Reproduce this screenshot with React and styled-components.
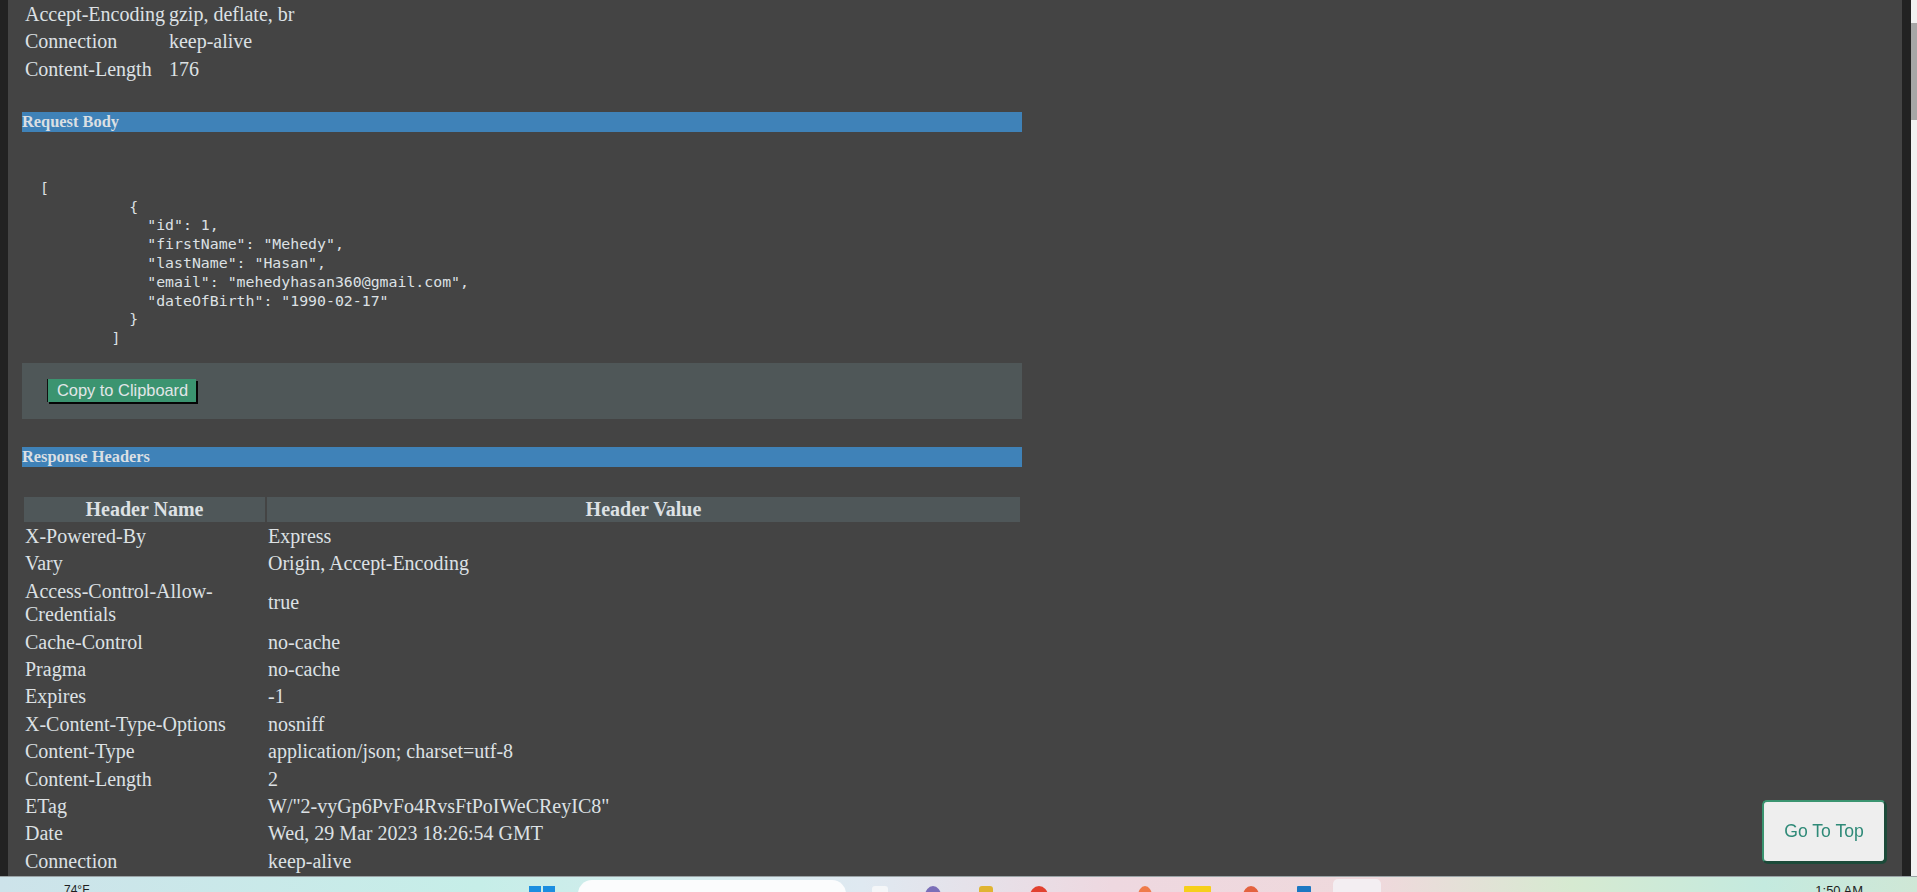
import React from 'react'
import styled, { createGlobalStyle } from 'styled-components'

const GlobalStyle = createGlobalStyle`
  *, *::before, *::after {
    box-sizing: border-box;
  }

  html, body {
    margin: 0;
    padding: 0;
    background-color: #222222;
    overflow: hidden;
  }
`

const Screen = styled.div`
  display: flex;
  height: 100vh;
  padding-left: 8px;
`

const Panel = styled.main`
  flex: 1;
  background-color: #444444;
  padding: 0 14px;
  color: #dde1e4;
  font-family: "Liberation Serif", "Times New Roman", serif;
  overflow: hidden;
`

const Content = styled.div`
  width: 1000px;
  display: flex;
  flex-direction: column;
`

const ScrollTrack = styled.div`
  width: 6px;
  margin-left: 9px;
  background-color: #f1f1f1;
`

const ScrollThumb = styled.div`
  margin-top: 23px;
  height: 97px;
  background-color: #a6a6a6;
`

const HeaderTable = styled.table`
  border-spacing: 2px;
  align-self: ${(props) => (props.$full ? 'stretch' : 'flex-start')};
  table-layout: ${(props) => (props.$full ? 'fixed' : 'auto')};
  margin-top: ${(props) => props.$top || '0'};
  font-size: 20px;

  th {
    background-color: #4f5759;
    font-weight: bold;
    line-height: 23px;
    padding: 1px;
    text-align: center;
  }

  td {
    line-height: 23.4px;
    padding: 1px;
    vertical-align: middle;
    text-align: left;
  }
`

const NameHead = styled.th`
  width: 241px;
`

const SectionBar = styled.h4`
  margin: ${(props) => props.$top} 0 0;
  height: 20px;
  line-height: 20px;
  background-color: #3f82b8;
  font-size: 16.4px;
  font-weight: bold;
  color: #dadfe3;
`

const CodeBlock = styled.pre`
  margin: 47px 0 15px;
  padding-left: 18px;
  font-family: "DejaVu Sans Mono", "Liberation Mono", monospace;
  font-size: 14.85px;
  line-height: 18.8px;
  color: #dde1e4;
`

const ActionPanel = styled.div`
  height: 56px;
  padding: 16px 25px 0;
  background-color: #4f5758;
`

const CopyButton = styled.button`
  height: 23px;
  padding: 0 8px 0 9px;
  border: none;
  border-left: 1px solid #111111;
  box-shadow: 2px 2px 0 #050505;
  background-color: #3b9470;
  color: #e2e6e8;
  font-family: "Liberation Sans", Arial, sans-serif;
  font-size: 16.4px;
  line-height: 23px;
  cursor: pointer;
`

const GoTopButton = styled.button`
  position: fixed;
  right: 31px;
  bottom: 29px;
  width: 124px;
  height: 63px;
  border: 2px solid #3a9470;
  border-right-color: #1c4a39;
  border-bottom-color: #1c4a39;
  border-radius: 5px;
  box-shadow: 1px 1px 0 #1c4a39;
  background-color: #eeeeee;
  color: #2f8a78;
  font-family: "Liberation Sans", Arial, sans-serif;
  font-size: 17.6px;
  cursor: pointer;
`

/* windows taskbar peeking in at the bottom of the screenshot */
const Taskbar = styled.footer`
  position: fixed;
  left: 0;
  right: 0;
  bottom: 0;
  height: 16px;
  display: flex;
  align-items: flex-start;
  padding: 0 54px 0 64px;
  border-top: 1px solid #9aa3a6;
  background: linear-gradient(
    90deg,
    #cde3ea 0%,
    #c6eee8 25%,
    #dfe9f1 45%,
    #eed8e0 58%,
    #efd9dc 72%,
    #d6ead1 82%,
    #c4eadf 92%,
    #cfe7d6 100%
  );
  overflow: hidden;
  font-family: "Liberation Sans", Arial, sans-serif;
  font-size: 12px;
  color: #1f1f1f;
`

const Weather = styled.span`
  width: 465px;
  padding-top: 6px;
`

const WinLogo = styled.span`
  display: grid;
  grid-template-columns: 12px 12px;
  gap: 2px;
  padding-top: 9px;

  i {
    height: 12px;
    background-color: #1b8ee0;
  }
`

const SearchBox = styled.span`
  width: 268px;
  height: 28px;
  margin: 3px 7px 0 23px;
  border-radius: 14px;
  background-color: #fbfcfd;
`

const IconSlot = styled.span`
  width: 53px;
  display: flex;
  justify-content: center;
  padding-top: ${(props) => (props.$active ? '2px' : '9px')};
`

const AppIcon = styled.span`
  width: ${(props) => props.$w}px;
  height: 20px;
  border-radius: ${(props) => props.$round || '3px'};
  background-color: ${(props) => props.$color};
`

const Clock = styled.span`
  margin-left: auto;
  padding-top: 6px;
  font-size: 13px;
`

const trayApps = [
  { w: 16, color: '#f4f6f8' },
  { w: 16, color: '#7b6fb8', round: '50%' },
  { w: 14, color: '#e0b431' },
  { w: 18, color: '#e2412f', round: '50%' },
  { w: 14, color: 'transparent' },
  { w: 14, color: '#ef7b4a', round: '50%' },
  { w: 27, color: '#f6cf1a', round: '1px' },
  { w: 16, color: '#e4623f', round: '50%' },
  { w: 14, color: '#1e78c2', round: '1px' },
  { w: 48, color: '#f3eef2', round: '5px', active: true },
]

const requestHeaders = [
  ['Accept-Encoding', 'gzip, deflate, br'],
  ['Connection', 'keep-alive'],
  ['Content-Length', '176'],
]

const responseHeaders = [
  ['X-Powered-By', 'Express'],
  ['Vary', 'Origin, Accept-Encoding'],
  ['Access-Control-Allow-Credentials', 'true'],
  ['Cache-Control', 'no-cache'],
  ['Pragma', 'no-cache'],
  ['Expires', '-1'],
  ['X-Content-Type-Options', 'nosniff'],
  ['Content-Type', 'application/json; charset=utf-8'],
  ['Content-Length', '2'],
  ['ETag', 'W/"2-vyGp6PvFo4RvsFtPoIWeCReyIC8"'],
  ['Date', 'Wed, 29 Mar 2023 18:26:54 GMT'],
  ['Connection', 'keep-alive'],
]

const requestBody = `[
          {
            "id": 1,
            "firstName": "Mehedy",
            "lastName": "Hasan",
            "email": "mehedyhasan360@gmail.com",
            "dateOfBirth": "1990-02-17"
          }
        ]`

const App = () => {
  return (
    <>
      <GlobalStyle />
      <Screen>
        <Panel>
          <Content>
            <HeaderTable>
              <tbody>
                {requestHeaders.map(([name, value], index) => (
                  <tr key={index}>
                    <td>{name}</td>
                    <td>{value}</td>
                  </tr>
                ))}
              </tbody>
            </HeaderTable>

            <SectionBar $top="27.5px">Request Body</SectionBar>
            <CodeBlock>{requestBody}</CodeBlock>
            <ActionPanel>
              <CopyButton>Copy to Clipboard</CopyButton>
            </ActionPanel>

            <SectionBar $top="28px">Response Headers</SectionBar>
            <HeaderTable $full $top="28px">
              <thead>
                <tr>
                  <NameHead>Header Name</NameHead>
                  <th>Header Value</th>
                </tr>
              </thead>
              <tbody>
                {responseHeaders.map(([name, value], index) => (
                  <tr key={index}>
                    <td>{name}</td>
                    <td>{value}</td>
                  </tr>
                ))}
              </tbody>
            </HeaderTable>
          </Content>
        </Panel>
        <ScrollTrack>
          <ScrollThumb />
        </ScrollTrack>
      </Screen>

      <GoTopButton>Go To Top</GoTopButton>

      <Taskbar>
        <Weather>74°F</Weather>
        <WinLogo>
          <i />
          <i />
        </WinLogo>
        <SearchBox />
        {trayApps.map((app, index) => (
          <IconSlot key={index} $active={app.active}>
            <AppIcon $w={app.w} $color={app.color} $round={app.round} />
          </IconSlot>
        ))}
        <Clock>1:50 AM</Clock>
      </Taskbar>
    </>
  )
}

export default App
